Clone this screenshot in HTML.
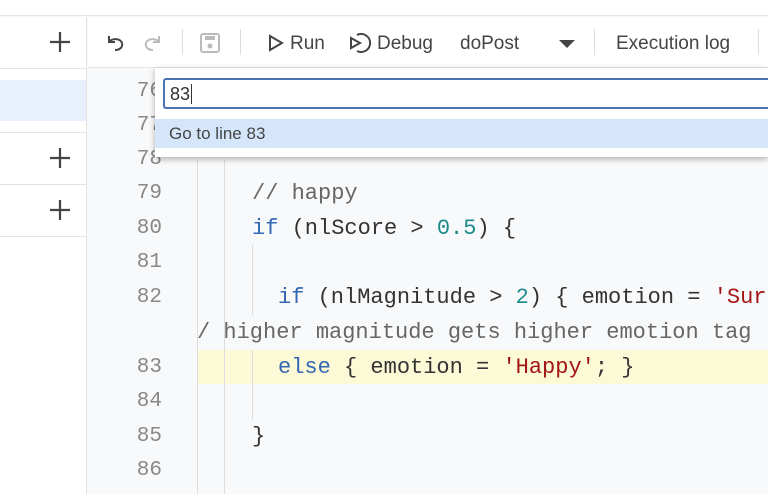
<!DOCTYPE html>
<html><head><style>
*{margin:0;padding:0;box-sizing:border-box}
html,body{overflow:hidden}
body{width:768px;height:494px;overflow:hidden;background:#f8f9fa;font-family:"Liberation Sans",sans-serif;position:relative}
.abs{position:absolute}
.tb{position:absolute;top:33px;font-size:19px;color:#444}
.ln{position:absolute;left:100px;width:62px;text-align:right;font-family:"Liberation Mono",monospace;font-size:21px;color:#888}
.code{position:absolute;font-family:"Liberation Mono",monospace;font-size:22px;color:#333;white-space:pre;overflow:hidden;right:0}
.kw{color:#3367b3}.num{color:#1c8a8a}.str{color:#a31515}.cm{color:#666}
</style></head><body>
<div class="abs" style="left:0;top:0;width:768px;height:16px;background:#fff;border-bottom:1px solid #e6e6e6"></div>
<div class="abs" style="left:0;top:17px;width:87px;height:477px;background:#fff;border-right:1px solid #e3e3e3"></div>
<div class="abs" style="left:0;top:68px;width:87px;height:1px;background:#e3e3e3"></div>
<div class="abs" style="left:0;top:80px;width:86px;height:41px;background:#e8f0fe"></div>
<div class="abs" style="left:0;top:132px;width:86px;height:1px;background:#e3e3e3"></div>
<div class="abs" style="left:0;top:184px;width:86px;height:1px;background:#e3e3e3"></div>
<div class="abs" style="left:0;top:236px;width:86px;height:1px;background:#e3e3e3"></div>
<svg class="abs" style="left:48px;top:30px" width="24" height="24"><path d="M12 2v20M2 12h20" stroke="#444" stroke-width="2.2"/></svg>
<svg class="abs" style="left:48px;top:146px" width="24" height="24"><path d="M12 2v20M2 12h20" stroke="#444" stroke-width="2.2"/></svg>
<svg class="abs" style="left:48px;top:198px" width="24" height="24"><path d="M12 2v20M2 12h20" stroke="#444" stroke-width="2.2"/></svg>
<div class="abs" style="left:88px;top:17px;width:680px;height:51px;background:#fff;border-bottom:1px solid #e6e6e6"></div>
<svg class="abs" style="left:104px;top:32px" width="22" height="22"><path d="M5 4v6h6M5 10 C8 6 16 6 18 11 C19 15 16 18 11 18" fill="none" stroke="#444" stroke-width="2"/></svg>
<svg class="abs" style="left:142px;top:32px" width="22" height="22"><path d="M17 4v6h-6M17 10 C14 6 6 6 4 11 C3 15 6 18 11 18" fill="none" stroke="#bbb" stroke-width="2"/></svg>
<div class="abs" style="left:182px;top:29px;width:1px;height:26px;background:#ddd"></div>
<svg class="abs" style="left:199px;top:32px" width="22" height="22"><rect x="2" y="2" width="18" height="18" rx="2" fill="none" stroke="#bbb" stroke-width="2"/><rect x="6" y="4" width="10" height="4" fill="#bbb"/><circle cx="11" cy="14" r="2.5" fill="#bbb"/></svg>
<div class="abs" style="left:240px;top:29px;width:1px;height:26px;background:#ddd"></div>
<svg class="abs" style="left:268px;top:34px" width="16" height="18"><path d="M2 2L14 9L2 16Z" fill="none" stroke="#444" stroke-width="2"/></svg>
<div class="tb" style="left:290px">Run</div>
<svg class="abs" style="left:348px;top:31px" width="24" height="24"><path d="M9 4A9 9 0 1 1 9 20" fill="none" stroke="#444" stroke-width="2"/><path d="M3 7L12 12L3 17Z" fill="none" stroke="#444" stroke-width="2"/></svg>
<div class="tb" style="left:377px">Debug</div>
<div class="tb" style="left:460px">doPost</div>
<svg class="abs" style="left:558px;top:39px" width="18" height="10"><path d="M1 1H17L9 9Z" fill="#444"/></svg>
<div class="abs" style="left:594px;top:29px;width:1px;height:26px;background:#ddd"></div>
<div class="tb" style="left:616px">Execution log</div>
<div class="abs" style="left:758px;top:29px;width:1px;height:26px;background:#ddd"></div>
<div class="abs" style="left:197px;top:350px;width:571px;height:34px;background:#fcf9d6"></div>
<div class="abs" style="left:197px;top:160px;width:1px;height:334px;background:#ddd"></div>
<div class="abs" style="left:224px;top:160px;width:1px;height:334px;background:#ddd"></div>
<div class="abs" style="left:252px;top:245px;width:1px;height:70px;background:#ddd"></div>
<div class="abs" style="left:252px;top:350px;width:1px;height:70px;background:#ddd"></div>
<div class="ln" style="top:80px">76</div>
<div class="ln" style="top:114px">77</div>
<div class="ln" style="top:148px">78</div>
<div class="ln" style="top:182px">79</div>
<div class="ln" style="top:217px">80</div>
<div class="ln" style="top:251px">81</div>
<div class="ln" style="top:286px">82</div>
<div class="ln" style="top:356px">83</div>
<div class="ln" style="top:390px">84</div>
<div class="ln" style="top:425px">85</div>
<div class="ln" style="top:459px">86</div>
<div class="code cm" style="left:252px;top:181px">// happy</div>
<div class="code" style="left:252px;top:216px"><span class="kw">if</span> (nlScore &gt; <span class="num">0.5</span>) {</div>
<div class="code" style="left:278px;top:285px"><span class="kw">if</span> (nlMagnitude &gt; <span class="num">2</span>) { emotion = <span class="str">'Surprised'</span></div>
<div class="code cm" style="left:197px;top:320px">/ higher magnitude gets higher emotion tag</div>
<div class="code" style="left:278px;top:355px"><span class="kw">else</span> { emotion = <span class="str">'Happy'</span>; }</div>
<div class="code" style="left:252px;top:424px">}</div>
<div class="abs" style="left:155px;top:68px;width:613px;height:89px;background:#fff;box-shadow:0 2px 6px rgba(0,0,0,.3)"></div>
<div class="abs" style="left:163px;top:78px;width:605px;height:31px;border:2px solid #4a73b5;border-right:none;border-radius:3px 0 0 3px;background:#fff"></div>
<div class="abs" style="left:170px;top:84px;font-size:18px;color:#333">83<span style="border-left:1px solid #333;margin-left:1px"></span></div>
<div class="abs" style="left:155px;top:119px;width:613px;height:29px;background:#d5e6fa"></div>
<div class="abs" style="left:169px;top:124px;font-size:17px;color:#444">Go to line 83</div>
</body></html>
